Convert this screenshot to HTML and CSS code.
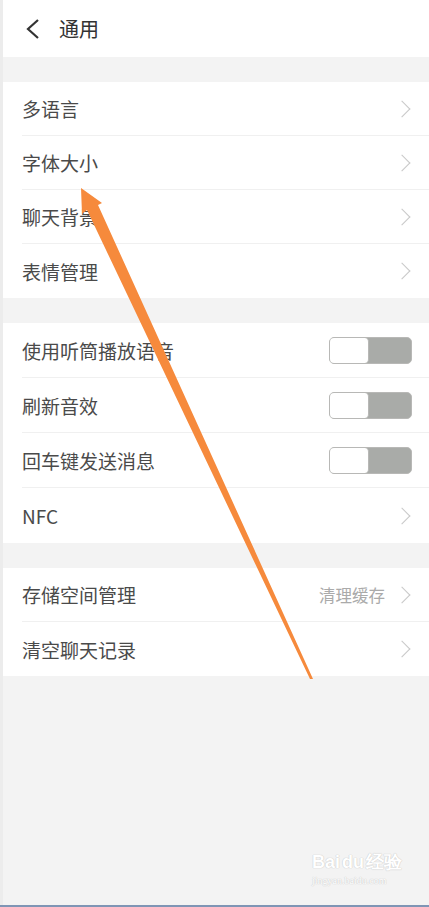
FILE: index.html
```html
<!DOCTYPE html>
<html lang="zh">
<head>
  <meta charset="UTF-8">
  <title>通用</title>
  <link rel="stylesheet" href="styles.css">
</head>
<body>

<div class="page">
  <div class="header">
    <svg class="back" width="16" height="22" viewBox="0 0 16 22">
      <path d="M13 2 L3 11 L13 20" fill="none" stroke="#333" stroke-width="2.2"/>
    </svg>
    <span class="title">通用</span>
  </div>

  <div class="group">
    <div class="row"><span class="label">多语言</span><span class="chev"></span></div>
    <div class="row"><span class="label">字体大小</span><span class="chev"></span></div>
    <div class="row"><span class="label">聊天背景</span><span class="chev"></span></div>
    <div class="row last"><span class="label">表情管理</span><span class="chev"></span></div>
  </div>

  <div class="group">
    <div class="row tall"><span class="label">使用听筒播放语音</span><span class="switch"><span class="knob"></span></span></div>
    <div class="row tall"><span class="label">刷新音效</span><span class="switch"><span class="knob"></span></span></div>
    <div class="row tall"><span class="label">回车键发送消息</span><span class="switch"><span class="knob"></span></span></div>
    <div class="row tall last"><span class="label">NFC</span><span class="chev"></span></div>
  </div>

  <div class="group">
    <div class="row"><span class="label">存储空间管理</span><span class="value">清理缓存</span><span class="chev"></span></div>
    <div class="row last"><span class="label">清空聊天记录</span><span class="chev"></span></div>
  </div>
</div>

<div class="watermark">
  <div class="wm-logo">Bai<span class="paw">du</span>经验</div>
  <div class="wm-url">jingyan.baidu.com</div>
</div>

<div class="bottom-bar"></div>

<svg class="arrow" width="429" height="907" viewBox="0 0 429 907">
  <polygon points="81,188 102,203 98,205 313,679 310,679 87,210 82,214" fill="#f68a3c"/>
</svg>

</body>
</html>
```

FILE: styles.css
```css
html, body {
  margin: 0;
  padding: 0;
}
body {
  font-family: "Noto Sans CJK SC", sans-serif;
  background-color: #ececec;
  width: 429px;
  height: 907px;
  overflow: hidden;
  position: relative;
}
.page {
  margin-left: 3px;
  background-color: #f3f3f3;
  height: 907px;
}
.header {
  height: 57px;
  background-color: #fff;
  display: flex;
  align-items: center;
  padding-left: 22px;
  margin-bottom: 25px;
}
.back {
  margin-top: 1px;
}
.title {
  font-size: 20px;
  color: #333;
  margin-left: 18px;
}
.group {
  background-color: #fff;
  padding-left: 19px;
  margin-bottom: 25px;
}
.row {
  height: 54px;
  box-sizing: border-box;
  border-bottom: 1px solid #f0f0f0;
  display: flex;
  align-items: center;
  padding-right: 18px;
}
.row.tall {
  height: 55px;
}
.row.last {
  border-bottom: none;
}
.label {
  flex: 1;
  font-size: 19px;
  color: #4a4a4a;
}
.value {
  font-size: 16.5px;
  color: #aaa;
  margin-right: 11px;
}
.chev {
  width: 11px;
  height: 11px;
  border-top: 1.6px solid #c8c8c8;
  border-right: 1.6px solid #c8c8c8;
  transform: rotate(45deg);
  margin-right: 3px;
}
.switch {
  width: 83px;
  height: 27px;
  box-sizing: border-box;
  border: 1.5px solid #b8b8b6;
  border-radius: 5px;
  background-color: #a9aba8;
  display: flex;
  margin-right: -1px;
}
.knob {
  width: 39px;
  height: 100%;
  box-sizing: border-box;
  background-color: #fff;
  border-right: 1.5px solid #b8b8b6;
  border-radius: 4px;
}
.watermark {
  position: absolute;
  left: 312px;
  top: 852px;
  color: #fff;
  text-shadow: 0 0 1px #c8c8c8, 0 0 1px #c8c8c8;
  font-family: "Liberation Sans", sans-serif;
}
.wm-logo {
  font-size: 18px;
  font-weight: bold;
  line-height: 20px;
}
.paw {
  margin: 0 2px;
}
.wm-url {
  font-family: "Liberation Serif", serif;
  font-size: 10px;
  line-height: 12px;
  margin-top: 3px;
}
.bottom-bar {
  position: absolute;
  left: 0;
  right: 0;
  bottom: 0;
  height: 2px;
  background-color: #7f95b5;
}
.arrow {
  position: absolute;
  left: 0;
  top: 0;
  pointer-events: none;
}
```
